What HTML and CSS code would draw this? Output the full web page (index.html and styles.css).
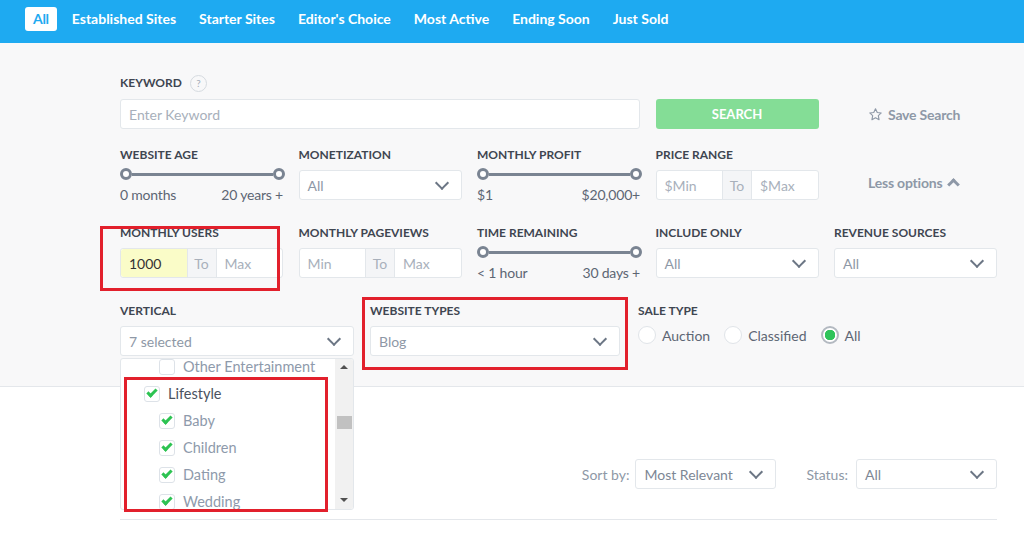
FILE: index.html
```html
<!DOCTYPE html>
<html lang="en">
<head>
  <meta charset="UTF-8">
  <meta name="viewport" content="width=device-width, initial-scale=1.0">
  <title>Marketplace Filters</title>
  <link rel="stylesheet" href="styles.css">
</head>
<body>
  <header class="nav">
    <span class="nav-item active">All</span>
    <span class="nav-item">Established Sites</span>
    <span class="nav-item">Starter Sites</span>
    <span class="nav-item">Editor's Choice</span>
    <span class="nav-item">Most Active</span>
    <span class="nav-item">Ending Soon</span>
    <span class="nav-item">Just Sold</span>
  </header>

  <section class="filters">
    <div class="grid row-first">
      <div class="field span3">
        <div class="label">KEYWORD <span class="help">?</span></div>
        <div class="box placeholder">Enter Keyword</div>
      </div>
      <div class="field end">
        <div class="btn-search">SEARCH</div>
      </div>
      <div class="field end">
        <div class="side-link">
          <svg width="15" height="15" viewBox="0 0 24 24"><path d="M12 2.8l2.8 5.9 6.4.8-4.7 4.4 1.2 6.4L12 17.2l-5.7 3.1 1.2-6.4-4.7-4.4 6.4-.8z" fill="none" stroke="#8e98a7" stroke-width="1.8" stroke-linejoin="round"/></svg>
          Save Search
        </div>
      </div>
    </div>

    <div class="grid row">
      <div class="field">
        <div class="label">WEBSITE AGE</div>
        <div class="slider"><span class="knob"></span><span class="bar"></span><span class="knob"></span></div>
        <div class="slider-labels"><span>0 months</span><span>20 years +</span></div>
      </div>
      <div class="field">
        <div class="label">MONETIZATION</div>
        <div class="box select">All <span class="chev"></span></div>
      </div>
      <div class="field">
        <div class="label">MONTHLY PROFIT</div>
        <div class="slider"><span class="knob"></span><span class="bar"></span><span class="knob"></span></div>
        <div class="slider-labels"><span>$1</span><span>$20,000+</span></div>
      </div>
      <div class="field">
        <div class="label">PRICE RANGE</div>
        <div class="box group">
          <span class="seg placeholder">$Min</span><span class="to">To</span><span class="seg placeholder">$Max</span>
        </div>
      </div>
      <div class="field end">
        <div class="side-link less">Less options <span class="chev-up"></span></div>
      </div>
    </div>

    <div class="grid row">
      <div class="field">
        <div class="label">MONTHLY USERS</div>
        <div class="box group">
          <span class="seg filled">1000</span><span class="to">To</span><span class="seg placeholder">Max</span>
        </div>
      </div>
      <div class="field">
        <div class="label">MONTHLY PAGEVIEWS</div>
        <div class="box group">
          <span class="seg placeholder">Min</span><span class="to">To</span><span class="seg placeholder">Max</span>
        </div>
      </div>
      <div class="field">
        <div class="label">TIME REMAINING</div>
        <div class="slider"><span class="knob"></span><span class="bar"></span><span class="knob"></span></div>
        <div class="slider-labels"><span>&lt; 1 hour</span><span>30 days +</span></div>
      </div>
      <div class="field">
        <div class="label">INCLUDE ONLY</div>
        <div class="box select">All <span class="chev"></span></div>
      </div>
      <div class="field">
        <div class="label">REVENUE SOURCES</div>
        <div class="box select">All <span class="chev"></span></div>
      </div>
    </div>

    <div class="row last-row">
      <div class="field vertical">
        <div class="label">VERTICAL</div>
        <div class="box select">7 selected <span class="chev"></span></div>
      </div>
      <div class="field types">
        <div class="label">WEBSITE TYPES</div>
        <div class="box select">Blog <span class="chev"></span></div>
      </div>
      <div class="field">
        <div class="label">SALE TYPE</div>
        <div class="radios">
          <span class="radio"></span><span class="radio-text">Auction</span>
          <span class="radio"></span><span class="radio-text">Classified</span>
          <span class="radio on"></span><span class="radio-text">All</span>
        </div>
      </div>
    </div>
  </section>

  <section class="results">
    <div class="sort-bar">
      <span class="sort-label">Sort by:</span>
      <div class="box select sort-select">Most Relevant <span class="chev"></span></div>
      <span class="sort-label status">Status:</span>
      <div class="box select sort-select">All <span class="chev"></span></div>
    </div>
  </section>

  <div class="dropdown">
    <div class="options">
      <div class="opt sub"><span class="check"></span>Other Entertainment</div>
      <div class="opt parent"><span class="check on"></span>Lifestyle</div>
      <div class="opt sub"><span class="check on"></span>Baby</div>
      <div class="opt sub"><span class="check on"></span>Children</div>
      <div class="opt sub"><span class="check on"></span>Dating</div>
      <div class="opt sub"><span class="check on"></span>Wedding</div>
    </div>
    <div class="scrollbar">
      <span class="arrow up"></span>
      <span class="thumb"></span>
      <span class="arrow down"></span>
    </div>
  </div>

  <div class="mark mark-users"></div>
  <div class="mark mark-types"></div>
  <div class="mark mark-list"></div>
</body>
</html>
```

FILE: styles.css
```css
body {
  margin: 0;
  font-family: "Lato", "Noto Sans", sans-serif;
  font-size: 14px;
  color: #5d6674;
  background: #fff;
  position: relative;
}

.nav {
  height: 43px;
  box-sizing: border-box;
  background: #1eaaf1;
  display: flex;
  align-items: flex-start;
  padding: 7px 0 0 25px;
  gap: 7px;
}
.nav-item {
  color: #fff;
  font-weight: 700;
  font-size: 14px;
  padding: 0 8px;
  line-height: 24px;
  border-radius: 3px;
}
.nav-item.active {
  background: #fff;
  color: #1eaaf1;
  letter-spacing: -0.3px;
}

.filters {
  background: #f8f8f9;
  border-bottom: 1px solid #e4e7eb;
  padding: 33px 0 30px 120px;
}

.grid {
  display: grid;
  grid-template-columns: repeat(5, 163px);
  column-gap: 15.5px;
}
.row { margin-top: 19px; }
.grid.row + .grid.row { margin-top: 25px; }
.last-row {
  display: flex;
  margin-top: 25px;
}

.field { display: flex; flex-direction: column; }
.field.end { justify-content: flex-end; }
.span3 { grid-column: span 3; }

.label {
  font-size: 12px;
  font-weight: 700;
  color: #3f4651;
  line-height: 14px;
  height: 14px;
  margin-bottom: 8px;
  display: flex;
  align-items: center;
  gap: 8px;
}
.row-first .label { margin-bottom: 9px; }
.help {
  width: 15px;
  height: 15px;
  border: 1px solid #d6dbe0;
  border-radius: 50%;
  font-size: 10px;
  font-weight: 400;
  color: #a5adb8;
  display: flex;
  align-items: center;
  justify-content: center;
}

.box {
  height: 30px;
  box-sizing: border-box;
  background: #fff;
  border: 1px solid #e3e7eb;
  border-radius: 3px;
  display: flex;
  align-items: center;
  padding: 0 8px;
  color: #8e98a6;
}
.placeholder { color: #a8b0bb; }

.select { justify-content: space-between; padding-right: 14px; }
.chev {
  width: 8px;
  height: 8px;
  border-right: 2px solid #6c7685;
  border-bottom: 2px solid #6c7685;
  transform: rotate(45deg);
  margin-top: -5px;
}
.chev-up {
  display: inline-block;
  width: 6px;
  height: 6px;
  border-left: 3px solid #8e98a7;
  border-top: 3px solid #8e98a7;
  transform: rotate(45deg);
  margin: 5px 0 0 7px;
}

.btn-search {
  height: 30px;
  background: #84dd96;
  border-radius: 3px;
  color: #fff;
  font-weight: 700;
  font-size: 13px;
  display: flex;
  align-items: center;
  justify-content: center;
}

.side-link {
  height: 30px;
  padding-left: 34px;
  display: flex;
  align-items: center;
  gap: 5px;
  color: #8e98a7;
  font-weight: 700;
  font-size: 14px;
  letter-spacing: -0.2px;
}
.side-link.less { height: 28px; gap: 0; margin-bottom: 5px; }

.group { padding: 0; }
.seg { flex: 1; padding: 0 8px; height: 100%; display: flex; align-items: center; }
.seg.filled { background: #fafcc8; color: #333; border-radius: 3px 0 0 3px; }
.to {
  width: 28px;
  height: 100%;
  display: flex;
  align-items: center;
  justify-content: center;
  background: #f4f5f7;
  border-left: 1px solid #e3e7eb;
  border-right: 1px solid #e3e7eb;
  color: #a8b0bb;
}

.slider {
  display: flex;
  align-items: center;
  height: 12px;
  margin-top: -2px;
  margin-right: -2px;
}
.knob {
  width: 12px;
  height: 12px;
  box-sizing: border-box;
  border: 3px solid #7a8492;
  border-radius: 50%;
  background: #fff;
}
.bar { flex: 1; height: 3px; background: #7a8492; }
.slider-labels {
  display: flex;
  justify-content: space-between;
  margin-top: 6px;
  margin-bottom: -3px;
  line-height: 18px;
  color: #5d6674;
  letter-spacing: -0.2px;
}

.vertical { width: 234px; margin-right: 16px; }
.types { width: 250px; margin-right: 18px; }

.radios { display: flex; align-items: center; height: 18px; }
.radio {
  width: 18px;
  height: 18px;
  box-sizing: border-box;
  border: 1px solid #e0e4e9;
  border-radius: 50%;
  background: #fff;
  margin-right: 6px;
}
.radio.on {
  border: 2px solid #b3b9c1;
  background: radial-gradient(circle, #2fc35a 0 5px, #fff 5.5px);
}
.radio-text { margin-right: 14px; color: #5d6674; }

.results { padding: 72px 0 0 120px; }
.sort-bar {
  width: 877px;
  display: flex;
  align-items: center;
  justify-content: flex-end;
  border-bottom: 1px solid #e4e7eb;
  padding-bottom: 30px;
}
.sort-label { color: #8e98a6; margin-right: 6px; }
.sort-label.status { margin-left: 30px; margin-right: 8px; }
.sort-select { width: 141px; color: #7d8795; }

.dropdown {
  position: absolute;
  top: 358px;
  left: 120px;
  width: 234px;
  height: 152px;
  box-sizing: border-box;
  background: #fff;
  border: 1px solid #e3e7eb;
  border-radius: 3px;
  display: flex;
  overflow: hidden;
}
.options { flex: 1; margin-top: -6px; }
.opt {
  height: 27px;
  display: flex;
  align-items: center;
  color: #8e9aab;
  font-size: 14.5px;
}
.opt.sub { padding-left: 38px; }
.opt.parent { padding-left: 23px; color: #4a5260; }
.check {
  width: 16px;
  height: 16px;
  box-sizing: border-box;
  border: 1px solid #dde2e8;
  border-radius: 3px;
  margin-right: 8px;
  position: relative;
}
.check.on::after {
  content: "";
  position: absolute;
  left: 2px;
  top: 2px;
  width: 7px;
  height: 3px;
  border-left: 3px solid #2dc352;
  border-bottom: 3px solid #2dc352;
  transform: rotate(-45deg);
}

.scrollbar {
  width: 18px;
  background: #f1f1f1;
  display: flex;
  flex-direction: column;
  align-items: center;
}
.arrow { width: 0; height: 0; border-left: 4px solid transparent; border-right: 4px solid transparent; }
.arrow.up { border-bottom: 4px solid #505050; margin-top: 6px; }
.arrow.down { border-top: 4px solid #505050; margin-top: auto; margin-bottom: 7px; }
.thumb { width: 15px; height: 13px; background: #c1c1c1; margin-top: 47px; }

.mark {
  position: absolute;
  border: 3px solid #e2202c;
  box-sizing: border-box;
}
.mark-users { left: 100px; top: 226px; width: 180px; height: 65px; }
.mark-types { left: 362px; top: 297px; width: 266px; height: 73px; }
.mark-list { left: 124px; top: 377px; width: 204px; height: 135px; }
```
